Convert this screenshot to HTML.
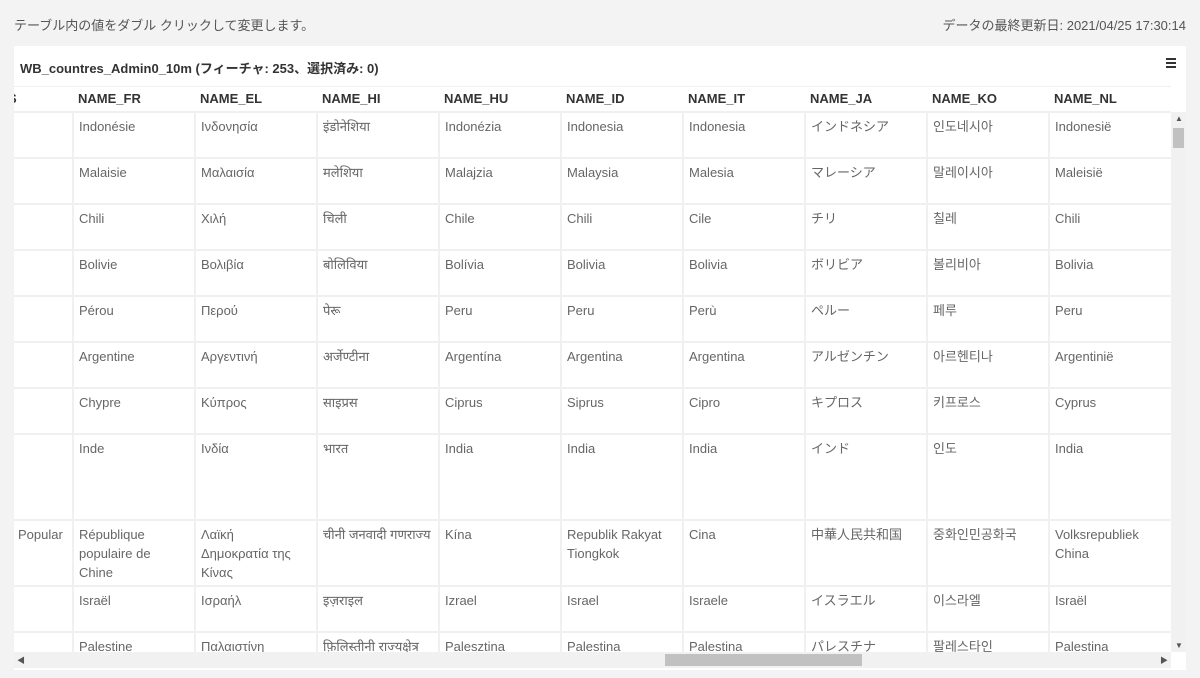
<!DOCTYPE html>
<html><head><meta charset="utf-8"><style>
*{margin:0;padding:0;box-sizing:border-box}
body{width:1200px;height:678px;background:#f3f3f3;font-family:"Liberation Sans","Noto Sans CJK JP",sans-serif;position:relative;overflow:hidden}
.top{position:absolute;top:15px;font-size:13px;color:#555}
.panel{position:absolute;left:14px;top:46px;width:1172px;height:624px;background:#fff}
.title{position:absolute;left:6px;top:12px;font-size:13px;font-weight:bold;color:#333}
.menu{position:absolute;right:10px;top:12px;width:10px}
.menu i{display:block;height:2px;background:#333;margin-bottom:2px}
.grid{position:absolute;left:0;top:40px;width:1157px;height:566px;overflow:hidden;border-top:1px solid #f0f0f0}
table{border-collapse:collapse;table-layout:fixed;width:1157px}
td,th{vertical-align:top;text-align:left;font-size:13px;line-height:19px;padding:4px 14px 0 5px;overflow:hidden;white-space:normal}
th{color:#333;font-weight:bold;height:25px;padding-top:2px}
td{color:#666;border-top:2px solid #f0f0f0;border-left:2px solid #f0f0f0}
td:first-child{border-left:none}
.vs{position:absolute;left:1157px;top:66px;width:15px;height:540px;background:#f1f1f1}
.vs .th{position:absolute;left:2px;top:16px;width:11px;height:20px;background:#c1c1c1}
.hs{position:absolute;left:0;top:606px;width:1157px;height:16px;background:#f1f1f1}
.hs .th{position:absolute;left:651px;top:2px;width:197px;height:12px;background:#c1c1c1}
.ar{position:absolute;font-size:8px;color:#555}
</style></head><body>
<div class="top" style="left:14px">テーブル内の値をダブル クリックして変更します。</div>
<div class="top" style="right:14px">データの最終更新日: 2021/04/25 17:30:14</div>
<div class="panel">
<div class="title">WB_countres_Admin0_10m (フィーチャ: 253、選択済み: 0)</div>
<div class="menu"><i></i><i></i><i></i></div>
<div class="grid">
<table>
<colgroup><col style="width:59px"><col style="width:122px"><col style="width:122px"><col style="width:122px"><col style="width:122px"><col style="width:122px"><col style="width:122px"><col style="width:122px"><col style="width:122px"><col style="width:122px"></colgroup>
<tr><th style="padding-left:0;text-indent:-6px">S</th><th>NAME_FR</th><th>NAME_EL</th><th>NAME_HI</th><th>NAME_HU</th><th>NAME_ID</th><th>NAME_IT</th><th>NAME_JA</th><th>NAME_KO</th><th>NAME_NL</th></tr>
<tr style="height:46px"><td></td><td>Indonésie</td><td>Ινδονησία</td><td>इंडोनेशिया</td><td>Indonézia</td><td>Indonesia</td><td>Indonesia</td><td>インドネシア</td><td>인도네시아</td><td>Indonesië</td></tr>
<tr style="height:46px"><td></td><td>Malaisie</td><td>Μαλαισία</td><td>मलेशिया</td><td>Malajzia</td><td>Malaysia</td><td>Malesia</td><td>マレーシア</td><td>말레이시아</td><td>Maleisië</td></tr>
<tr style="height:46px"><td></td><td>Chili</td><td>Χιλή</td><td>चिली</td><td>Chile</td><td>Chili</td><td>Cile</td><td>チリ</td><td>칠레</td><td>Chili</td></tr>
<tr style="height:46px"><td></td><td>Bolivie</td><td>Βολιβία</td><td>बोलिविया</td><td>Bolívia</td><td>Bolivia</td><td>Bolivia</td><td>ボリビア</td><td>볼리비아</td><td>Bolivia</td></tr>
<tr style="height:46px"><td></td><td>Pérou</td><td>Περού</td><td>पेरू</td><td>Peru</td><td>Peru</td><td>Perù</td><td>ペルー</td><td>페루</td><td>Peru</td></tr>
<tr style="height:46px"><td></td><td>Argentine</td><td>Αργεντινή</td><td>अर्जेण्टीना</td><td>Argentína</td><td>Argentina</td><td>Argentina</td><td>アルゼンチン</td><td>아르헨티나</td><td>Argentinië</td></tr>
<tr style="height:46px"><td></td><td>Chypre</td><td>Κύπρος</td><td>साइप्रस</td><td>Ciprus</td><td>Siprus</td><td>Cipro</td><td>キプロス</td><td>키프로스</td><td>Cyprus</td></tr>
<tr style="height:86px"><td></td><td>Inde</td><td>Ινδία</td><td>भारत</td><td>India</td><td>India</td><td>India</td><td>インド</td><td>인도</td><td>India</td></tr>
<tr style="height:66px"><td style="padding-left:4px;padding-right:0">Popular</td><td>République populaire de Chine</td><td>Λαϊκή<br>Δημοκρατία της Κίνας</td><td style="white-space:nowrap">चीनी जनवादी गणराज्य</td><td>Kína</td><td>Republik Rakyat Tiongkok</td><td>Cina</td><td>中華人民共和国</td><td>중화인민공화국</td><td>Volksrepubliek China</td></tr>
<tr style="height:46px"><td></td><td>Israël</td><td>Ισραήλ</td><td>इज़राइल</td><td>Izrael</td><td>Israel</td><td>Israele</td><td>イスラエル</td><td>이스라엘</td><td>Israël</td></tr>
<tr style="height:46px"><td></td><td>Palestine</td><td>Παλαιστίνη</td><td style="white-space:nowrap">फ़िलिस्तीनी राज्यक्षेत्र</td><td>Palesztina</td><td>Palestina</td><td>Palestina</td><td>パレスチナ</td><td>팔레스타인</td><td>Palestina</td></tr>
</table>
</div>
<div class="vs"><div class="th"></div><span class="ar" style="left:4px;top:2px">▲</span><span class="ar" style="left:4px;bottom:2px">▼</span></div>
<div class="hs"><div class="th"></div><span class="ar" style="left:3px;top:3px">◀</span><span class="ar" style="right:3px;top:3px">▶</span></div>
</div>
</body></html>
